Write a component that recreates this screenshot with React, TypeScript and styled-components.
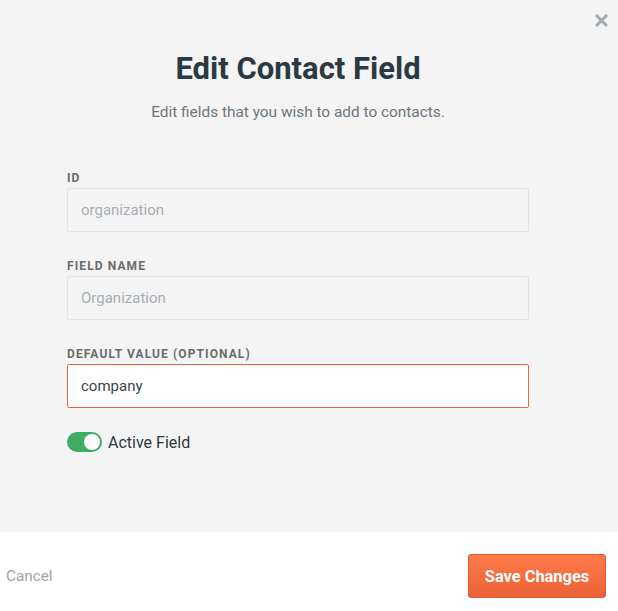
import React from "react";
import styled, { createGlobalStyle } from "styled-components";

const Global = createGlobalStyle`
  html, body { margin: 0; padding: 0; background: #ffffff; }
  body { font-family: Roboto, "Liberation Sans", Arial, sans-serif; }
  * { box-sizing: border-box; }
`;

const Modal = styled.div`
  width: 618px;
  height: 611px;
  display: flex;
  flex-direction: column;
  position: relative;
`;

const Body = styled.div`
  height: 532px;
  background: #f4f4f4;
  display: flex;
  flex-direction: column;
  align-items: center;
  padding: 50px 22px 0 0;
`;

const Close = styled.button`
  position: absolute;
  top: 11px;
  right: 9px;
  width: 16px;
  height: 18px;
  padding: 0;
  border: none;
  background: transparent;
  display: flex;
  align-items: center;
  justify-content: center;
  cursor: pointer;
`;

const Title = styled.h1`
  margin: 0;
  font-size: 31px;
  line-height: 38px;
  font-weight: 700;
  color: #2b3a42;
`;

const Subtitle = styled.p`
  margin: 14px 0 0;
  font-size: 15.4px;
  line-height: 20px;
  color: #6c757d;
`;

const Form = styled.div`
  width: 462px;
  margin-top: 49px;
  display: flex;
  flex-direction: column;
  gap: 27px;
`;

const Field = styled.div`
  display: flex;
  flex-direction: column;
  gap: 3px;
`;

const Label = styled.label`
  font-size: 12px;
  line-height: 14px;
  font-weight: 700;
  letter-spacing: 1.1px;
  text-transform: uppercase;
  color: #6b6b6b;
`;

const Input = styled.input<{ $active?: boolean }>`
  width: 100%;
  height: 44px;
  padding: 0 13px;
  font-family: inherit;
  font-size: 15px;
  border-radius: 2px;
  outline: none;
  border: 1px solid ${(p) => (p.$active ? "#e8633a" : "#e2e2e2")};
  background: ${(p) => (p.$active ? "#ffffff" : "#f4f4f4")};
  color: ${(p) => (p.$active ? "#3a454d" : "#a7afb4")};
  &::placeholder { color: #a7afb4; }
`;

const ToggleRow = styled.div`
  display: flex;
  align-items: center;
  gap: 6px;
  margin-top: -3px;
`;

const Switch = styled.div<{ $on: boolean }>`
  width: 35px;
  height: 20px;
  border-radius: 10px;
  background: ${(p) => (p.$on ? "#3fab65" : "#ccc")};
  padding: 2px;
  display: flex;
  justify-content: ${(p) => (p.$on ? "flex-end" : "flex-start")};
`;

const Knob = styled.div`
  width: 16px;
  height: 16px;
  border-radius: 50%;
  background: #ffffff;
`;

const ToggleText = styled.span`
  font-size: 16px;
  color: #2f3a40;
`;

const Footer = styled.div`
  flex: 1;
  background: #ffffff;
  display: flex;
  align-items: flex-start;
  justify-content: space-between;
  padding: 22px 12px 0 6px;
`;

const CancelBtn = styled.button`
  height: 44px;
  border: none;
  background: transparent;
  padding: 0;
  font-family: inherit;
  font-size: 15.3px;
  color: #9aa3aa;
  cursor: pointer;
`;

const SaveBtn = styled.button`
  width: 138px;
  height: 44px;
  border: 1px solid #e0592e;
  border-radius: 3px;
  background: linear-gradient(#ff7a4b, #eb6238);
  color: #ffffff;
  font-family: inherit;
  font-size: 16.4px;
  font-weight: 700;
  cursor: pointer;
`;

export default function App() {
  return (
    <>
      <Global />
      <Modal>
        <Close aria-label="Close">
          <svg width="13" height="13" viewBox="0 0 13 13">
            <path d="M2 2 L11 11 M11 2 L2 11" stroke="#a3abb0" strokeWidth="3" strokeLinecap="square" />
          </svg>
        </Close>
        <Body>
          <Title>Edit Contact Field</Title>
          <Subtitle>Edit fields that you wish to add to contacts.</Subtitle>
          <Form>
            <Field>
              <Label>ID</Label>
              <Input placeholder="organization" readOnly />
            </Field>
            <Field>
              <Label>Field Name</Label>
              <Input placeholder="Organization" readOnly />
            </Field>
            <Field>
              <Label>Default Value (optional)</Label>
              <Input $active defaultValue="company" />
            </Field>
            <ToggleRow>
              <Switch $on>
                <Knob />
              </Switch>
              <ToggleText>Active Field</ToggleText>
            </ToggleRow>
          </Form>
        </Body>
        <Footer>
          <CancelBtn>Cancel</CancelBtn>
          <SaveBtn>Save Changes</SaveBtn>
        </Footer>
      </Modal>
    </>
  );
}
